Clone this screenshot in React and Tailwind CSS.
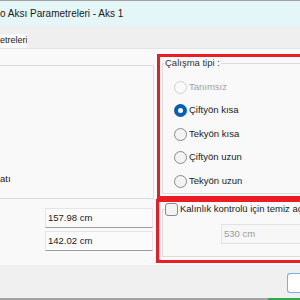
const options = [
  { label: 'Tanımsız', state: 'disabled' },
  { label: 'Çiftyön kısa', state: 'checked' },
  { label: 'Tekyön kısa', state: 'idle' },
  { label: 'Çiftyön uzun', state: 'idle' },
  { label: 'Tekyön uzun', state: 'idle' },
];

function Radio({ label, state }) {
  return (
    <div className="h-[23.5px] flex items-center">
      {state === 'checked' ? (
        <span className="w-[13px] h-[13px] rounded-full bg-[#005fb8] flex items-center justify-center shrink-0">
          <span className="w-[5px] h-[5px] rounded-full bg-white" />
        </span>
      ) : (
        <span
          className={
            state === 'disabled'
              ? 'w-[13px] h-[13px] rounded-full border border-[#d0d0d0] bg-[#f9f9f9] shrink-0'
              : 'w-[13px] h-[13px] rounded-full border border-[#8a8a8a] bg-[#f3f3f3] shrink-0'
          }
        />
      )}
      <span className={state === 'disabled' ? 'ml-[2px] text-[#a3a3a3]' : 'ml-[2px] text-[#1b1b1b]'}>{label}</span>
    </div>
  );
}

function App() {
  return (
    <div className="w-[300px] h-[300px] overflow-hidden flex flex-col bg-[#f0f0f0] text-[9.5px] text-[#1b1b1b] font-['Liberation_Sans',Arial,sans-serif]">
      {/* Title bar */}
      <div className="h-[26px] shrink-0 bg-[#e5f6f8] border-t border-[#a0a0a0] flex items-center">
        <span className="text-[10px] text-[#1a1a1a] -mt-[1px]">o Aksı Parametreleri - Aks 1</span>
      </div>

      {/* Tab strip */}
      <div className="h-[22px] shrink-0 bg-[#efefef] flex items-end">
        <div className="h-[14px] w-[27px] bg-[#f9f9f9] flex items-center text-[9px] whitespace-nowrap overflow-hidden">etreleri</div>
      </div>

      {/* Tab page */}
      <div className="h-[217px] shrink-0 bg-[#f9f9f9] border-t border-[#e3e3e3] flex">
        {/* Left column */}
        <div className="w-[156px] shrink-0 flex flex-col">
          <div className="mt-[16px] w-[154px] h-[134px] border-y border-r border-[#dcdcdc] flex flex-col justify-end pb-[12px]">
            <span>atı</span>
          </div>
          <div className="mt-[9px] ml-[45px] w-[108px] flex flex-col gap-[3px]">
            <div className="h-[20px] bg-[#fbfbfb] border border-[#e5e5e5] border-b-[#9c9c9c] flex items-center px-[2px]">157.98 cm</div>
            <div className="h-[20px] bg-[#fbfbfb] border border-[#e5e5e5] border-b-[#9c9c9c] flex items-center px-[2px]">142.02 cm</div>
          </div>
        </div>

        {/* Right column */}
        <div className="w-[200px] shrink-0 flex flex-col">
          <div className="mt-[5px] ml-[1px] h-[145px] border-[3px] border-r-0 border-[#ec1c24] pl-[2px] pb-[3px] flex flex-col">
            <fieldset className="flex-1 border border-r-0 border-[#dcdcdc] -mt-[1px]">
              <legend className="ml-[1px] px-[1px] text-[#333]">Çalışma tipi :</legend>
              <div className="mt-[5px] pl-[11px] flex flex-col">
                {options.map((o) => (
                  <Radio key={o.label} {...o} />
                ))}
              </div>
            </fieldset>
          </div>
          <div className="h-[64px] border-[3px] border-r-0 border-[#ec1c24] pl-[3px] pb-[3px] flex flex-col">
            <fieldset className="flex-1 min-w-0 border border-r-0 border-[#dcdcdc]">
              <legend className="ml-[2px] flex items-center whitespace-nowrap">
                <span className="w-[13px] h-[13px] rounded-[3px] border border-[#8a8a8a] bg-[#f3f3f3] shrink-0" />
                <span className="ml-[2px]">Kalınlık kontrolü için temiz açıklık</span>
              </legend>
              <div className="mt-[8px] ml-[58px] h-[20px] w-[120px] bg-[#f7f7f7] border border-[#e3e3e3] text-[#9a9a9a] flex items-center px-[2px]">530 cm</div>
            </fieldset>
          </div>
        </div>
      </div>

      {/* Footer */}
      <div className="flex-1 flex justify-end items-start pt-[8px]">
        <div className="h-[20px] w-[14px] -mr-[1px] bg-white border border-r-0 border-[#74b0ea] rounded-l-[3px]" />
      </div>

      {/* Taskbar edge */}
      <div className="h-[2px] shrink-0 bg-[#a3a3a3] flex justify-end">
        <div className="w-[32px] bg-[#2fa84f]" />
      </div>
    </div>
  );
}

export default App;
